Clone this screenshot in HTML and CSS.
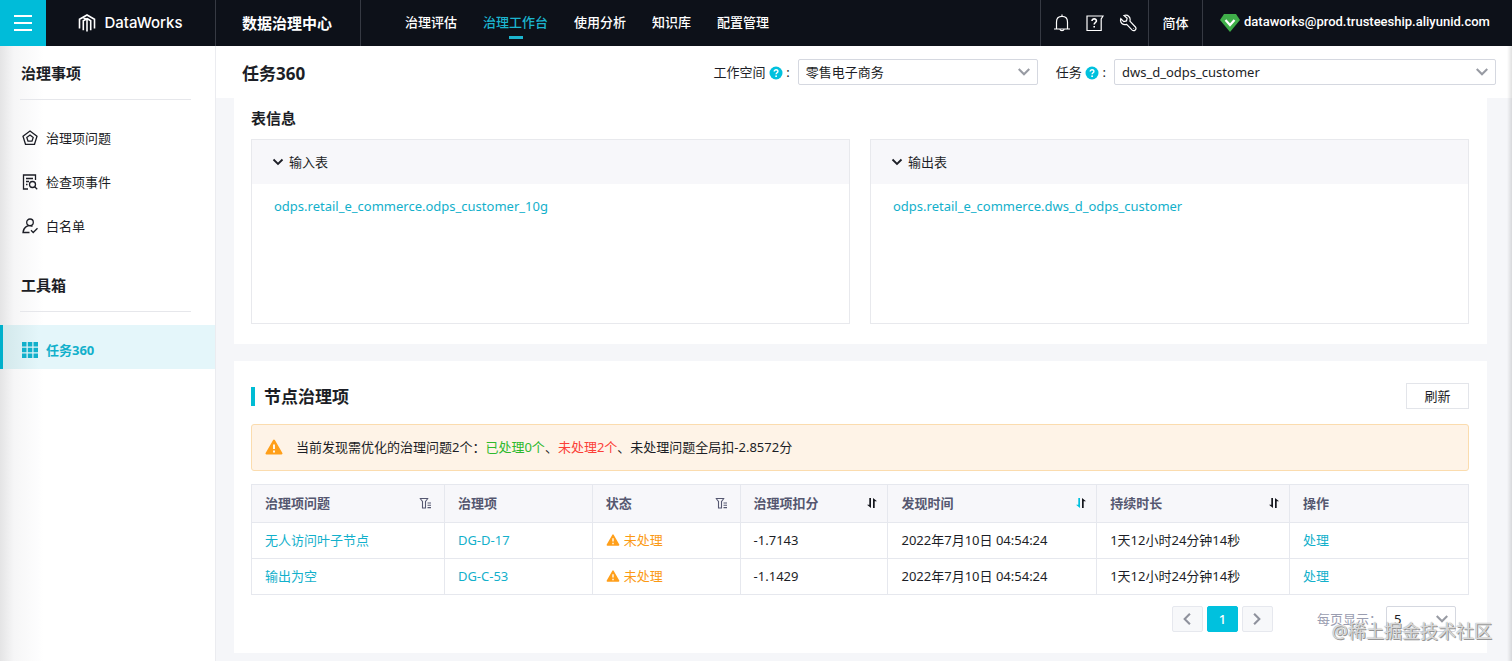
FILE: index.html
```html
<!DOCTYPE html>
<html lang="zh-CN">
<head>
	<meta charset="UTF-8">
	<meta name="viewport" content="width=device-width, initial-scale=1">
	<title>任务360 - 数据治理中心</title>
	<link rel="stylesheet" href="styles.css">
</head>
<body>
	<svg class="defs" aria-hidden="true">
		<symbol id="down" viewBox="0 0 12 12"><path d="M1.5 3.5 6 8l4.500-4.500" fill="none" stroke="currentColor" stroke-width="1.800"/></symbol>
		<symbol id="help" viewBox="0 0 14 14"><circle cx="7" cy="7" r="6.500" fill="#00c1de"/><path d="M5.200 5.600c0-2.600 3.800-2.400 3.700-.2 0 1.300-1.800 1.400-1.800 2.900" fill="none" stroke="#fff" stroke-width="1.400"/><circle cx="7.100" cy="10.200" r=".9" fill="#fff"/></symbol>
		<symbol id="warn" viewBox="0 0 18 16"><path d="M9 1.500 16.500 14.500H1.500z" fill="#ff9f1a" stroke="#ff9f1a" stroke-width="2" stroke-linejoin="round"/><path d="M9 5.500v4.500M9 11.500v2" stroke="#fff" stroke-width="1.800"/></symbol>
		<symbol id="filter" viewBox="0 0 12 12"><path d="M.7 1.500h8.600M1.500 2l2 2.500V11h3V4.500l2-2.500M8.500 6H12M8.500 8.300H12M8.500 10.600H12" fill="none" stroke="currentColor" stroke-width="1.100"/></symbol>
		<symbol id="sort" viewBox="0 0 12 12"><path d="M5 1v10L1 7.800h2.300V1z" fill="currentColor"/><path d="M7 11V1L11 4.200H8.700V11z"/></symbol>
	</svg>

	<header class="topbar">
		<button class="menu" type="button" aria-label="菜单"><span></span><span></span><span></span></button>
		<a class="brand" href="#">
			<svg width="18" height="20" viewBox="0 0 18 20" fill="none" stroke="#fff" stroke-width="1.600"><path d="M1.500 15.500V6.300L9 2l7.500 4.300v9.200M5.300 17.300V7.800L9.500 5.500M5.300 4.500 9 6.800V18.500M12.700 17.300V7.800L9 5.500"/></svg>
			DataWorks
		</a>
		<a class="product" href="#">数据治理中心</a>
		<nav class="nav">
			<a href="#">治理评估</a>
			<a href="#" class="on">治理工作台</a>
			<a href="#">使用分析</a>
			<a href="#">知识库</a>
			<a href="#">配置管理</a>
		</nav>
		<div class="tools">
			<button type="button" aria-label="通知"><svg width="18" height="18" viewBox="0 0 18 18"><path d="M1 15h16M3.500 15V8c0-3.400 2.200-5.700 5.500-5.700s5.500 2.300 5.500 5.700v7M9 .5v2M7 15.500c.3 1.600 3.700 1.600 4 0"/></svg></button>
			<button type="button" aria-label="帮助"><svg width="18" height="18" viewBox="0 0 18 18"><path d="M1 2h16l-1.800 3v11.500H1z"/><path d="M6 7c0-3 4.500-2.700 4.400-.1 0 1.500-2.200 1.800-2.200 3.600M8.200 12v1.600" stroke-width="1.600"/></svg></button>
			<button type="button" aria-label="设置"><svg width="18" height="18" viewBox="0 0 18 18"><path d="M5 1.500c4-1.200 7 1.900 5.900 5.700l5.500 5.800c1.700 2-1.100 4.900-3.200 3.100L7.700 10.400C3.900 11.700.6 8.500 1.800 4.700l3 2.900 2.700-.7.600-2.600z"/><path d="M14.500 14.500h.5"/></svg></button>
		</div>
		<button class="lang" type="button">简体</button>
		<a class="user" href="#">
			<svg width="20" height="18" viewBox="0 0 20 18"><path d="M4 0h12l4 6-10 12L0 6z" fill="#3fae49"/><path d="m5.500 6 4.500 5 4.500-5" fill="none" stroke="#fff" stroke-width="2.200"/></svg>
			<span>dataworks@prod.trusteeship.aliyunid.com</span>
		</a>
	</header>

	<div class="layout">
		<aside class="side">
			<h2>治理事项</h2>
			<ul>
				<li><a href="#"><svg width="16" height="16" viewBox="0 0 16 16"><path d="M8 1 15 6.200 12.500 14.300h-9L1 6.200z"/><path d="m8 5 3.200 2.400-1.200 3.700H6L4.800 7.400z"/></svg>治理项问题</a></li>
				<li><a href="#"><svg width="16" height="16" viewBox="0 0 16 16"><path d="M6 15H1.500V1h12v5M4 4.500h7M4 7.500h3M4 10.500h1.500"/><circle cx="10.500" cy="10.500" r="3"/><path d="m12.700 12.700 2.500 2.500"/></svg>检查项事件</a></li>
				<li><a href="#"><svg width="16" height="16" viewBox="0 0 16 16"><circle cx="8" cy="4.300" r="3.300"/><path d="M10.500 8.300C6 6.500 1.500 9 1 14.500h6.500M9 12.300l2.200 2.200 4.300-4.300"/></svg>白名单</a></li>
			</ul>
			<h2>工具箱</h2>
			<ul>
				<li class="on"><a href="#"><svg width="16" height="16" viewBox="0 0 16 16"><path d="M0 0h4.500v4.500H0zM5.800 0h4.500v4.500H5.800zM11.500 0H16v4.500h-4.500zM0 5.800h4.500v4.500H0zM5.800 5.800h4.500v4.500H5.800zM11.500 5.800H16v4.500h-4.500zM0 11.500h4.500V16H0zM5.800 11.500h4.500V16H5.800zM11.500 11.500H16V16h-4.500z"/></svg>任务360</a></li>
			</ul>
		</aside>

		<main class="main">
			<div class="head">
				<h1>任务360</h1>
				<div class="field">
					<label for="space">工作空间 <svg width="14" height="14"><use href="#help"/></svg> :</label>
					<div class="select space">
						<select id="space"><option>零售电子商务</option></select>
						<svg width="14" height="14"><use href="#down"/></svg>
					</div>
				</div>
				<div class="field">
					<label for="task">任务 <svg width="14" height="14"><use href="#help"/></svg> :</label>
					<div class="select task">
						<select id="task"><option>dws_d_odps_customer</option></select>
						<svg width="14" height="14"><use href="#down"/></svg>
					</div>
				</div>
			</div>

			<section class="card tables">
				<h2>表信息</h2>
				<div class="panels">
					<div class="panel">
						<button type="button"><svg width="12" height="12"><use href="#down"/></svg>输入表</button>
						<a href="#">odps.retail_e_commerce.odps_customer_10g</a>
					</div>
					<div class="panel">
						<button type="button"><svg width="12" height="12"><use href="#down"/></svg>输出表</button>
						<a href="#">odps.retail_e_commerce.dws_d_odps_customer</a>
					</div>
				</div>
			</section>

			<section class="card issues">
				<div class="title">
					<h2>节点治理项</h2>
					<button type="button">刷新</button>
				</div>
				<div class="alert">
					<svg width="18" height="16"><use href="#warn"/></svg>
					<p>当前发现需优化的治理问题2个：<span class="green">已处理0个</span>、<span class="red">未处理2个</span>、未处理问题全局扣-2.8572分</p>
				</div>
				<table>
					<thead>
						<tr>
							<th class="w-issue"><div>治理项问题<svg width="12" height="12"><use href="#filter"/></svg></div></th>
							<th class="w-item">治理项</th>
							<th class="w-item"><div>状态<svg width="12" height="12"><use href="#filter"/></svg></div></th>
							<th class="w-item"><div>治理项扣分<svg class="sort" width="12" height="12"><use href="#sort"/></svg></div></th>
							<th class="w-time"><div>发现时间<svg class="sort active" width="12" height="12"><use href="#sort"/></svg></div></th>
							<th class="w-issue"><div>持续时长<svg class="sort" width="12" height="12"><use href="#sort"/></svg></div></th>
							<th>操作</th>
						</tr>
					</thead>
					<tbody>
						<tr>
							<td><a href="#">无人访问叶子节点</a></td>
							<td><a href="#">DG-D-17</a></td>
							<td><span class="status"><svg width="14" height="12"><use href="#warn"/></svg>未处理</span></td>
							<td>-1.7143</td>
							<td>2022年7月10日 04:54:24</td>
							<td>1天12小时24分钟14秒</td>
							<td><a href="#">处理</a></td>
						</tr>
						<tr>
							<td><a href="#">输出为空</a></td>
							<td><a href="#">DG-C-53</a></td>
							<td><span class="status"><svg width="14" height="12"><use href="#warn"/></svg>未处理</span></td>
							<td>-1.1429</td>
							<td>2022年7月10日 04:54:24</td>
							<td>1天12小时24分钟14秒</td>
							<td><a href="#">处理</a></td>
						</tr>
					</tbody>
				</table>
				<div class="pager">
					<button type="button" class="prev" aria-label="上一页"><svg width="14" height="14"><use href="#down"/></svg></button>
					<button type="button" class="on">1</button>
					<button type="button" class="next" aria-label="下一页"><svg width="14" height="14"><use href="#down"/></svg></button>
					<label for="size">每页显示：</label>
					<div class="select size">
						<select id="size"><option>5</option></select>
						<svg width="14" height="14"><use href="#down"/></svg>
					</div>
				</div>
			</section>
		</main>
	</div>
	<div class="mark">@稀土掘金技术社区</div>
</body>
</html>
```
FILE: styles.css
```css
*{
	box-sizing: border-box;
	margin: 0;
	padding: 0;
}
body{
	position: relative;
	display: flex;
	flex-direction: column;
	min-height: 100vh;
	font: 13px/20px "Noto Sans","Noto Sans CJK SC",sans-serif;
	color: #1c1e26;
	background: #f5f6f9;
}
ul{
	list-style: none;
}
a{
	color: #12b0cb;
	text-decoration: none;
}
button,select{
	font: inherit;
	color: inherit;
	border: 0;
	background: none;
	cursor: pointer;
}
svg{
	flex: none;
}
.defs{
	position: absolute;
	width: 0;
	height: 0;
}

/* 顶部导航 */
.topbar{
	display: flex;
	height: 46px;
	color: #fff;
	background: #0d1119;
}
.topbar a{
	color: #fff;
}
.menu{
	display: flex;
	flex-direction: column;
	justify-content: center;
	align-items: center;
	gap: 5px;
	width: 46px;
	background: #00bcd9;
}
.menu span{
	width: 18px;
	height: 2px;
	background: #fff;
}
.brand,.product,.lang,.user,.tools{
	display: flex;
	align-items: center;
	justify-content: center;
	border-right: 1px solid #363a43;
}
.brand{
	gap: 8px;
	width: 170px;
	font: 500 15px/20px Inter,sans-serif;
}
.product{
	width: 145px;
	padding-right: 2px;
	font-size: 15px;
	font-weight: 600;
}
.nav{
	display: flex;
	gap: 26px;
	padding-left: 44px;
	font-weight: 500;
}
.nav a{
	position: relative;
	line-height: 44px;
}
.topbar .nav .on{
	color: #1cb5cf;
}
.nav .on::after{
	content: "";
	position: absolute;
	left: 50%;
	top: 36px;
	width: 14px;
	height: 3px;
	margin-left: -7px;
	background: #1cb5cf;
}
.tools{
	gap: 15px;
	width: 109px;
	margin-left: auto;
	border-left: 1px solid #363a43;
}
.tools button{
	height: 18px;
}
.tools svg{
	display: block;
	fill: none;
	stroke: #fff;
	stroke-width: 1.2;
}
.lang{
	width: 54px;
	font-weight: 500;
}
.user{
	justify-content: flex-start;
	gap: 4px;
	min-width: 309px;
	padding: 0 16px 0 17px;
	border: 0;
	font: 500 13px/20px Roboto,sans-serif;
}
.user span{
	padding-bottom: 3px;
}

/* 左侧菜单 */
.layout{
	position: relative;
	display: flex;
	flex: 1;
}
.layout::after{
	content: "";
	position: absolute;
	top: 0;
	right: 0;
	bottom: 0;
	width: 5px;
	background: linear-gradient(90deg,rgba(0,0,0,0),rgba(0,0,0,.12));
	pointer-events: none;
}
.side{
	width: 216px;
	border-right: 1px solid #ebecf0;
	background: linear-gradient(90deg,#e4e4e5 0,#f6f6f7 14px,#fff 44px);
}
.side h2{
	margin: 0 24px 16px 20px;
	padding: 17px 0 16px 1px;
	border-bottom: 1px solid #e6e7eb;
	font-size: 15px;
	font-weight: 600;
}
.side ul + h2{
	margin-bottom: 13px;
	padding-top: 27px;
}
.side a{
	display: flex;
	align-items: center;
	gap: 8px;
	height: 44px;
	padding-left: 22px;
	color: #1c1e26;
}
.side svg{
	fill: none;
	stroke: currentColor;
	stroke-width: 1.3;
}
.side .on a{
	padding: 6px 0 0 19px;
	border-left: 3px solid #00b0cb;
	color: #12b0cb;
	font-weight: 700;
	background: linear-gradient(90deg,#d3e8eb 0,#e4f6fa 36px);
}
.side .on svg{
	fill: currentColor;
	stroke: none;
}

/* 内容区 */
.main{
	flex: 1;
	min-width: 0;
}
.head{
	display: flex;
	align-items: center;
	gap: 18px;
	height: 52px;
	padding: 0 16px 0 26px;
	background: #fff;
}
.head h1{
	margin-right: auto;
	padding-top: 3px;
	font-size: 17px;
	font-weight: 700;
}
.field{
	display: flex;
	align-items: center;
	gap: 8px;
}
.field label svg{
	vertical-align: -3px;
}
.select{
	position: relative;
}
.select select{
	width: 100%;
	height: 26px;
	padding: 0 7px;
	border: 1px solid #d5d8e0;
	border-radius: 2px;
	background: #fff;
	appearance: none;
}
.select svg{
	position: absolute;
	right: 7px;
	top: 6px;
	color: #989ba3;
	pointer-events: none;
}
.space{
	width: 240px;
}
.task{
	width: 382px;
}
.card{
	margin: 0 25px 0 18px;
	padding: 0 18px 0 17px;
	background: #fff;
}
.tables{
	padding-bottom: 20px;
}
.tables h2{
	padding: 10px 0 11px;
	font-size: 15px;
	font-weight: 600;
}
.panels{
	display: grid;
	grid-template-columns: 1fr 1fr;
	gap: 20px;
}
.panel{
	min-height: 185px;
	border: 1px solid #e8e9ed;
}
.panel button{
	display: flex;
	align-items: center;
	gap: 5px;
	width: 100%;
	height: 44px;
	padding-left: 20px;
	padding-bottom: 1px;
	background: #f7f7fa;
}
.panel a{
	display: inline-block;
	padding: 12px 22px;
}
.issues{
	margin-top: 17px;
	padding-top: 22px;
	padding-bottom: 21px;
}
.title{
	display: flex;
	align-items: center;
	justify-content: space-between;
}
.title h2{
	padding-left: 9px;
	border-left: 4px solid #00bcd4;
	font-size: 17px;
	line-height: 19px;
	font-weight: 600;
}
.title button{
	width: 63px;
	height: 26px;
	border: 1px solid #e3e5ea;
}
.alert{
	display: flex;
	align-items: center;
	gap: 13px;
	height: 47px;
	margin: 15px 0 13px;
	padding-left: 13px;
	padding-bottom: 2px;
	border: 1px solid #fbdcae;
	border-radius: 3px;
	background: #fef3e7;
}
.green{
	color: #2db92d;
}
.red{
	color: #fb4038;
}
table{
	width: 100%;
	table-layout: fixed;
	border-collapse: collapse;
}
th,td{
	height: 36px;
	padding: 0 13px 1px;
	border: 1px solid #e6e8ee;
	text-align: left;
}
th{
	height: 38px;
	color: #555770;
	font-weight: 600;
	background: #f7f7fa;
}
th div{
	display: flex;
	align-items: center;
	justify-content: space-between;
}
.w-issue{
	width: 15.85%;
}
.w-item{
	width: 12.15%;
}
.w-time{
	width: 17.15%;
}
.sort{
	margin-right: -4px;
	color: #15171d;
	fill: #15171d;
}
.sort.active{
	color: #00c1de;
}
.status{
	display: flex;
	align-items: center;
	gap: 4px;
	color: #fb9a14;
}
.pager{
	display: flex;
	align-items: center;
	justify-content: flex-end;
	gap: 4px;
	padding: 11px 13px 0 0;
}
.pager button{
	display: flex;
	align-items: center;
	justify-content: center;
	width: 31px;
	height: 26px;
	border: 1px solid #e6e8ee;
	border-radius: 2px;
	color: #8f929d;
	background: #f7f8fa;
}
.pager .on{
	border-color: #00c1de;
	color: #fff;
	font-weight: 500;
	background: #00c1de;
}
.prev svg{
	transform: rotate(90deg);
}
.next svg{
	transform: rotate(-90deg);
}
.pager label{
	margin-left: 40px;
	color: #9a9db0;
}
.size{
	width: 70px;
}

/* 水印 */
.mark{
	position: absolute;
	right: 20px;
	bottom: 18px;
	color: rgba(255,255,255,.7);
	font-size: 18px;
	line-height: 24px;
	text-shadow: 0 0 1px #777,1px 1px 0 #999;
	pointer-events: none;
}
```
